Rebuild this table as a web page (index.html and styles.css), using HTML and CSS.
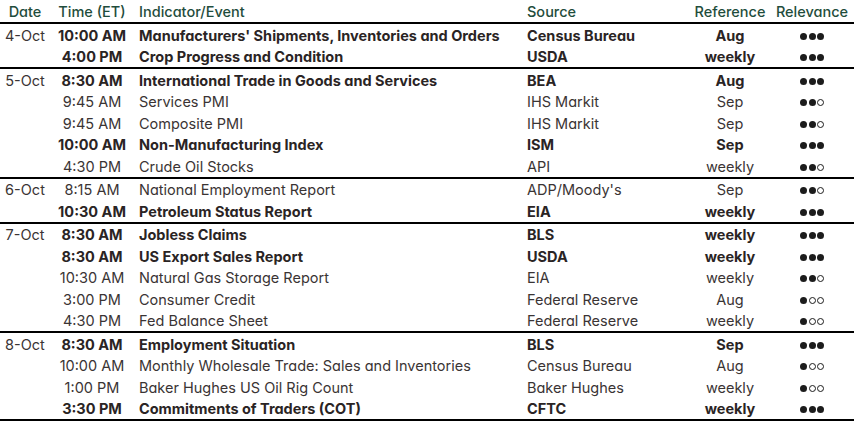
FILE: index.html
```html
<!DOCTYPE html>
<html lang="en">
<head>
<meta charset="utf-8">
<title>Economic Calendar</title>
<link rel="stylesheet" href="styles.css">
</head>
<body>
<div class="cal">
  <div class="row head">
    <div class="c date">Date</div>
    <div class="c time">Time (ET)</div>
    <div class="c ind">Indicator/Event</div>
    <div class="c src">Source</div>
    <div class="c ref">Reference</div>
    <div class="c rel">Relevance</div>
  </div>

  <div class="group">
    <div class="row b"><div class="c date">4-Oct</div><div class="c time">10:00 AM</div><div class="c ind">Manufacturers' Shipments, Inventories and Orders</div><div class="c src">Census Bureau</div><div class="c ref">Aug</div><div class="c rel"><i class="d"></i><i class="d"></i><i class="d"></i></div></div>
    <div class="row b"><div class="c date"></div><div class="c time">4:00 PM</div><div class="c ind">Crop Progress and Condition</div><div class="c src">USDA</div><div class="c ref">weekly</div><div class="c rel"><i class="d"></i><i class="d"></i><i class="d"></i></div></div>
  </div>

  <div class="group">
    <div class="row b"><div class="c date">5-Oct</div><div class="c time">8:30 AM</div><div class="c ind">International Trade in Goods and Services</div><div class="c src">BEA</div><div class="c ref">Aug</div><div class="c rel"><i class="d"></i><i class="d"></i><i class="d"></i></div></div>
    <div class="row"><div class="c date"></div><div class="c time">9:45 AM</div><div class="c ind">Services PMI</div><div class="c src">IHS Markit</div><div class="c ref">Sep</div><div class="c rel"><i class="d"></i><i class="d"></i><i class="d o"></i></div></div>
    <div class="row"><div class="c date"></div><div class="c time">9:45 AM</div><div class="c ind">Composite PMI</div><div class="c src">IHS Markit</div><div class="c ref">Sep</div><div class="c rel"><i class="d"></i><i class="d"></i><i class="d o"></i></div></div>
    <div class="row b"><div class="c date"></div><div class="c time">10:00 AM</div><div class="c ind">Non-Manufacturing Index</div><div class="c src">ISM</div><div class="c ref">Sep</div><div class="c rel"><i class="d"></i><i class="d"></i><i class="d"></i></div></div>
    <div class="row"><div class="c date"></div><div class="c time">4:30 PM</div><div class="c ind">Crude Oil Stocks</div><div class="c src">API</div><div class="c ref">weekly</div><div class="c rel"><i class="d"></i><i class="d"></i><i class="d o"></i></div></div>
  </div>

  <div class="group">
    <div class="row"><div class="c date">6-Oct</div><div class="c time">8:15 AM</div><div class="c ind">National Employment Report</div><div class="c src">ADP/Moody's</div><div class="c ref">Sep</div><div class="c rel"><i class="d"></i><i class="d"></i><i class="d o"></i></div></div>
    <div class="row b"><div class="c date"></div><div class="c time">10:30 AM</div><div class="c ind">Petroleum Status Report</div><div class="c src">EIA</div><div class="c ref">weekly</div><div class="c rel"><i class="d"></i><i class="d"></i><i class="d"></i></div></div>
  </div>

  <div class="group">
    <div class="row b"><div class="c date">7-Oct</div><div class="c time">8:30 AM</div><div class="c ind">Jobless Claims</div><div class="c src">BLS</div><div class="c ref">weekly</div><div class="c rel"><i class="d"></i><i class="d"></i><i class="d"></i></div></div>
    <div class="row b"><div class="c date"></div><div class="c time">8:30 AM</div><div class="c ind">US Export Sales Report</div><div class="c src">USDA</div><div class="c ref">weekly</div><div class="c rel"><i class="d"></i><i class="d"></i><i class="d"></i></div></div>
    <div class="row"><div class="c date"></div><div class="c time">10:30 AM</div><div class="c ind">Natural Gas Storage Report</div><div class="c src">EIA</div><div class="c ref">weekly</div><div class="c rel"><i class="d"></i><i class="d"></i><i class="d o"></i></div></div>
    <div class="row"><div class="c date"></div><div class="c time">3:00 PM</div><div class="c ind">Consumer Credit</div><div class="c src">Federal Reserve</div><div class="c ref">Aug</div><div class="c rel"><i class="d"></i><i class="d o"></i><i class="d o"></i></div></div>
    <div class="row"><div class="c date"></div><div class="c time">4:30 PM</div><div class="c ind">Fed Balance Sheet</div><div class="c src">Federal Reserve</div><div class="c ref">weekly</div><div class="c rel"><i class="d"></i><i class="d o"></i><i class="d o"></i></div></div>
  </div>

  <div class="group">
    <div class="row b"><div class="c date">8-Oct</div><div class="c time">8:30 AM</div><div class="c ind">Employment Situation</div><div class="c src">BLS</div><div class="c ref">Sep</div><div class="c rel"><i class="d"></i><i class="d"></i><i class="d"></i></div></div>
    <div class="row"><div class="c date"></div><div class="c time">10:00 AM</div><div class="c ind">Monthly Wholesale Trade: Sales and Inventories</div><div class="c src">Census Bureau</div><div class="c ref">Aug</div><div class="c rel"><i class="d"></i><i class="d o"></i><i class="d o"></i></div></div>
    <div class="row"><div class="c date"></div><div class="c time">1:00 PM</div><div class="c ind">Baker Hughes US Oil Rig Count</div><div class="c src">Baker Hughes</div><div class="c ref">weekly</div><div class="c rel"><i class="d"></i><i class="d o"></i><i class="d o"></i></div></div>
    <div class="row b"><div class="c date"></div><div class="c time">3:30 PM</div><div class="c ind">Commitments of Traders (COT)</div><div class="c src">CFTC</div><div class="c ref">weekly</div><div class="c rel"><i class="d"></i><i class="d"></i><i class="d"></i></div></div>
  </div>
</div>
</body>
</html>
```

FILE: styles.css
```css
html, body {
  margin: 0;
  padding: 0;
  background: #ffffff;
}

body {
  font-family: Inter, "Noto Sans", "DejaVu Sans", sans-serif;
  font-feature-settings: "cv11" 1;
  font-size: 14.5px;
  color: #3a3434;
}

.cal {
  width: 854px;
}

.row {
  display: grid;
  grid-template-columns: 50px 84px 388px 168px 80px 84px;
  height: 21.5px;
  align-items: center;
  white-space: nowrap;
}

.row.head {
  height: 22px;
  color: #1f4d3c;
  font-weight: 500;
  border-bottom: 2px solid #000;
}

.group {
  border-bottom: 2px solid #000;
}

.c {
  line-height: 1;
  padding-top: 2px;
}

.date, .time, .ref, .rel {
  text-align: center;
}

.ind, .src {
  padding-left: 5px;
}

.row.b .time,
.row.b .ind,
.row.b .src,
.row.b .ref {
  font-weight: 700;
  color: #2a2424;
}

.rel {
  display: flex;
  justify-content: center;
  gap: 1.5px;
  padding-top: 3px;
}

.d {
  display: block;
  width: 7px;
  height: 7px;
  border-radius: 50%;
  background: #1c1c1c;
  box-sizing: border-box;
}

.d.o {
  background: transparent;
  border: 1px solid #1c1c1c;
}

.row.head .rel {
  display: block;
  padding-top: 2px;
}
```
